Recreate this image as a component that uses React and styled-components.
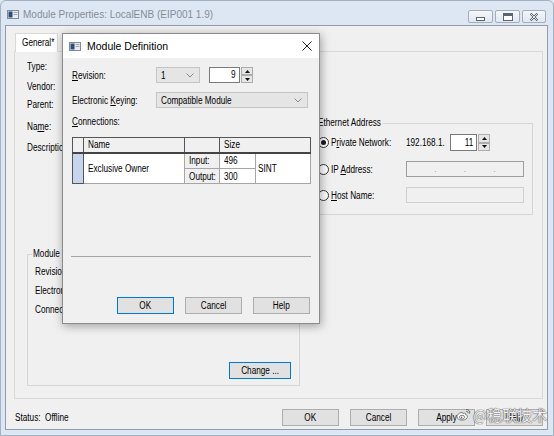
import React from 'react';
import styled, { createGlobalStyle, css } from 'styled-components';

const UI = '"Liberation Sans", Arial, sans-serif';

const Global = createGlobalStyle`
  html, body { margin: 0; padding: 0; background: #dde7f3; }
  body { font-family: ${UI}; font-size: 10px; color: #000; overflow: hidden; }
  * { box-sizing: border-box; }
  fieldset, legend { margin: 0; }
`;

/* Arial-Narrow-like rendering: Liberation Sans squeezed horizontally */
const narrow = css`
  white-space: nowrap;
  transform: scaleX(0.82);
  transform-origin: left center;
`;

const T = styled.span`
  display: inline-block;
  white-space: nowrap;
  transform: scaleX(0.82);
  transform-origin: ${p => p.$o || 'left'} center;
`;

const Window = styled.div`
  position: relative;
  width: 554px;
  height: 436px;
  background: #dde7f3;
  border: 1px solid #a3b1c2;
  border-radius: 6px 6px 0 0;
  display: flex;
  flex-direction: column;
`;

const TitleBar = styled.div`
  height: 24px;
  display: flex;
  align-items: center;
  padding: 2px 7px 0 6px;
`;

const Title = styled.div`
  margin-left: 4px;
  font-size: 10px;
  color: #838d99;
  white-space: nowrap;
`;

const Controls = styled.div`
  margin-left: auto;
  display: flex;
  gap: 2px;
  align-self: flex-start;
  margin-top: 7px;
`;

const CtrlButton = styled.div`
  width: ${p => p.$w}px;
  height: 13px;
  border: 1px solid #a4aebb;
  border-radius: 2px;
  background: linear-gradient(#f4f7fa, #e0e7ef);
  display: flex;
  align-items: center;
  justify-content: center;
`;

const Client = styled.div`
  flex: 1;
  margin: 0 5px 5px 4px;
  border: 1px solid #8f9db0;
  background: #f0f0f0;
  display: flex;
  flex-direction: column;
  padding: 7px 4px 0 8px;
`;

const TabStrip = styled.div`
  display: flex;
  height: 18px;
  position: relative;
  z-index: 1;
`;

const Tab = styled.div`
  margin-left: 1px;
  width: 43px;
  height: 19px;
  background: #fff;
  border: 1px solid #d9d9d9;
  border-bottom: none;
  padding-left: 6px;
  line-height: 17px;
`;

const TabPanel = styled.div`
  height: 348px;
  border: 1px solid #d9d9d9;
  background: #f0f0f0;
  display: flex;
  padding: 0 9px 12px 12px;
`;

const LeftCol = styled.div`
  width: 273px;
  display: flex;
  flex-direction: column;
`;

const RightCol = styled.div`
  margin-left: 10px;
  width: 223px;
`;

const Label = styled.div`
  ${narrow};
  margin-top: ${p => p.$mt || 0}px;
  height: 16px;
  line-height: 16px;
`;

const Group = styled.fieldset`
  margin-top: ${p => p.$mt}px;
  border: 1px solid #d5d5d5;
  min-width: 0;
  display: flex;
  flex-direction: column;
  padding: ${p => p.$pad};
  flex: ${p => (p.$grow ? 1 : 'none')};
`;

const Legend = styled.legend`
  width: ${p => p.$w}px;
  padding: 0 1px;
  margin-left: ${p => p.$ml}px;
  line-height: 12px;
  white-space: nowrap;
`;

const Button = styled.div`
  width: ${p => p.$w || 57}px;
  height: 17px;
  background: #e1e1e1;
  border: 1px solid ${p => (p.$default ? '#0078d7' : '#adadad')};
  display: flex;
  align-items: center;
  justify-content: center;
  flex: none;
`;

const ChangeButton = styled(Button)`
  margin-top: auto;
  align-self: flex-end;
`;

const NetRow = styled.div`
  display: flex;
  align-items: center;
  height: ${p => p.$h}px;
  margin-top: ${p => p.$mt || 0}px;
`;

const RadioLabel = styled.div`
  width: 88px;
  display: flex;
  align-items: center;
`;

const Radio = styled.span`
  flex: none;
  width: 11px;
  height: 11px;
  border-radius: 50%;
  border: 1px solid #333;
  background: #fff;
  margin-right: 2px;
  display: flex;
  align-items: center;
  justify-content: center;
  &::after {
    content: '';
    width: 5px;
    height: 5px;
    border-radius: 50%;
    background: ${p => (p.$checked ? '#1a1a1a' : 'transparent')};
  }
`;

const IpPrefix = styled.div`
  width: 44px;
`;

const SpinWrap = styled.div`
  display: flex;
  height: ${p => p.$h}px;
`;

const SpinField = styled.div`
  width: ${p => p.$w}px;
  height: 100%;
  background: #fff;
  border: 1px solid #7a7a7a;
  text-align: right;
  padding-right: 3px;
  line-height: ${p => p.$h - 2}px;
`;

const SpinButtons = styled.div`
  width: 14px;
  height: 100%;
  display: flex;
  flex-direction: column;
  padding: 0 1px;
`;

const SpinBtn = styled.div`
  flex: 1;
  background: #e6e6e6;
  border: 1px solid #adadad;
  display: flex;
  align-items: center;
  justify-content: center;
`;

const AddrField = styled.div`
  width: 118px;
  height: 16px;
  background: #f0f0f0;
  border: 1px solid ${p => (p.$dark ? '#9d9d9d' : '#cfcfcf')};
  display: flex;
  justify-content: space-evenly;
  align-items: center;
  color: #8a8a8a;
  font-size: 8px;
`;

const StatusBar = styled.div`
  flex: 1;
  display: flex;
  align-items: flex-start;
  padding: 10px 0 0 1px;
`;

const StatusText = styled.div`
  ${narrow};
  line-height: 17px;
  white-space: pre;
`;

const ButtonRow = styled.div`
  margin-left: auto;
  display: flex;
  gap: 11px;
  margin-top: ${p => p.$mt || 0}px;
  justify-content: flex-end;
`;

const Dialog = styled.div`
  position: absolute;
  left: 61px;
  top: 32px;
  width: 258px;
  border: 1px solid #8c8c8c;
  background: #f0f0f0;
  box-shadow: 1px 2px 9px rgba(0, 0, 0, 0.35);
  z-index: 2;
`;

const DialogTitle = styled.div`
  height: 24px;
  background: #fff;
  display: flex;
  align-items: center;
  padding: 0 7px 0 6px;
`;

const DialogTitleText = styled.div`
  margin-left: 6px;
  font-size: 10.5px;
`;

const CloseX = styled.div`
  margin-left: auto;
  display: flex;
`;

const DialogBody = styled.div`
  padding: 9px 9px 9px 9px;
  display: flex;
  flex-direction: column;
`;

const FormRow = styled.div`
  display: flex;
  align-items: center;
  height: 16px;
  margin-top: ${p => p.$mt || 0}px;
`;

const FormLabel = styled.div`
  ${narrow};
  width: 84px;
  flex: none;
`;

const Combo = styled.div`
  width: ${p => p.$w}px;
  height: 16px;
  background: #e5e5e5;
  border: 1px solid #c4c4c4;
  display: flex;
  align-items: center;
  padding: 0 5px 0 4px;
  justify-content: space-between;
`;

const SpinGap = styled.div`
  margin-left: 9px;
`;

const SectionLabel = styled.div`
  ${narrow};
  margin-top: 7px;
  line-height: 14px;
`;

const Table = styled.table`
  margin-top: 8px;
  width: 238px;
  border-collapse: collapse;
  table-layout: fixed;
  border: 1px solid #555;
`;

const Th = styled.th`
  height: 15px;
  padding: 0 0 0 4px;
  text-align: left;
  font-weight: normal;
  background: #f0f0f0;
  border-right: 1px solid #555;
  border-bottom: 2px solid #444;
`;

const Td = styled.td`
  height: ${p => p.$h || 15}px;
  padding: 0 0 0 ${p => (p.$pl ?? 4)}px;
  background: ${p => (p.$bg || '#fff')};
  border: 1px solid ${p => (p.$strong ? '#555' : '#a6a6a6')};
  white-space: nowrap;
`;

const Separator = styled.div`
  margin: 72px -1px 0 -1px;
  height: 1px;
  background: #a5a5a5;
`;

const Watermark = styled.div`
  position: absolute;
  left: 455px;
  top: 403px;
  display: flex;
  align-items: center;
  gap: 2px;
  font-family: "Noto Sans CJK SC", "Liberation Sans", sans-serif;
  font-size: 15px;
  color: rgba(255, 255, 255, 0.92);
  text-shadow: 0 0 1px rgba(60, 60, 60, 0.9), 0 0 1px rgba(60, 60, 60, 0.9);
  z-index: 3;
  white-space: nowrap;
`;

const AppIcon = () => (
  <svg width="12" height="9" viewBox="0 0 12 9">
    <rect x="0.5" y="0.5" width="11" height="8" fill="#e9edf1" stroke="#7f8b97" />
    <rect x="1.5" y="1.5" width="4" height="6" fill="#2b4a7e" />
    <rect x="6.5" y="2" width="4" height="1" fill="#9aa6b2" />
    <rect x="6.5" y="4" width="4" height="1" fill="#9aa6b2" />
  </svg>
);

const Chevron = () => (
  <svg width="8" height="5" viewBox="0 0 8 5">
    <polyline points="0.5,0.5 4,4 7.5,0.5" fill="none" stroke="#8a8a8a" strokeWidth="1" />
  </svg>
);

const Up = () => (
  <svg width="5" height="3" viewBox="0 0 5 3"><path d="M0 3 L2.5 0 L5 3Z" fill="#111" /></svg>
);
const Down = () => (
  <svg width="5" height="3" viewBox="0 0 5 3"><path d="M0 0 L2.5 3 L5 0Z" fill="#111" /></svg>
);

const Spin = ({ value, w, h }) => (
  <SpinWrap $h={h}>
    <SpinField $w={w} $h={h}><T $o="right">{value}</T></SpinField>
    <SpinButtons>
      <SpinBtn><Up /></SpinBtn>
      <SpinBtn><Down /></SpinBtn>
    </SpinButtons>
  </SpinWrap>
);

const U = styled.span`text-decoration: underline;`;

const WeiboLogo = () => (
  <svg width="15" height="13" viewBox="0 0 15 13">
    <path d="M6 4.5 C3 4.5 0.8 6.8 1 8.8 C1.2 11 3.6 12.3 6.3 12.2 C9.3 12.1 11.6 10.5 11.4 8.4 C11.3 7.3 10.4 6.9 9.6 6.8 C10 5.7 9.6 4.9 8.3 5.1 C7.6 5.2 7.2 5.5 7 5.6 C7.1 4.8 6.8 4.5 6 4.5Z" fill="rgba(255,255,255,0.9)" stroke="#666" strokeWidth="0.8" />
    <ellipse cx="6" cy="9.2" rx="2.6" ry="1.9" fill="none" stroke="#666" strokeWidth="0.8" />
    <circle cx="5.6" cy="9.4" r="0.8" fill="#666" />
    <path d="M10 1.5 C12.5 1.2 14.3 3.2 13.7 5.6" fill="none" stroke="#666" strokeWidth="1" />
    <path d="M10.2 3.3 C11.5 3.2 12.3 4.2 12 5.3" fill="none" stroke="#666" strokeWidth="1" />
  </svg>
);

export default function App() {
  return (
    <>
      <Global />
      <Window>
        <TitleBar>
          <AppIcon />
          <Title>Module Properties: LocalENB (EIP001 1.9)</Title>
          <Controls>
            <CtrlButton $w={25}>
              <svg width="9" height="4" viewBox="0 0 9 4" style={{ marginTop: 4 }}>
                <rect x="0.5" y="0.5" width="8" height="3" fill="#fff" stroke="#5a6572" />
              </svg>
            </CtrlButton>
            <CtrlButton $w={25}>
              <svg width="10" height="8" viewBox="0 0 10 8">
                <rect x="0.5" y="0.5" width="9" height="7" fill="#fff" stroke="#5a6572" />
                <rect x="1" y="1" width="8" height="2" fill="#5a6572" />
              </svg>
            </CtrlButton>
            <CtrlButton $w={24}>
              <svg width="10" height="8" viewBox="0 0 10 8">
                <path d="M1.5 0.5 L8.5 7.5 M8.5 0.5 L1.5 7.5" stroke="#5a6572" strokeWidth="2.2" />
                <path d="M1.5 0.5 L8.5 7.5 M8.5 0.5 L1.5 7.5" stroke="#fff" strokeWidth="0.8" />
              </svg>
            </CtrlButton>
          </Controls>
        </TitleBar>

        <Client>
          <TabStrip>
            <Tab><T>General*</T></Tab>
          </TabStrip>
          <TabPanel>
            <LeftCol>
              <Label $mt={7}>Type:</Label>
              <Label $mt={4}>Vendor:</Label>
              <Label $mt={2}>Parent:</Label>
              <Label $mt={6}>Na<U>m</U>e:</Label>
              <Label $mt={5}>Description:</Label>
              <Group $mt={92} $grow $pad="0 8px 6px 7px">
                <Legend $ml={-3} $w={66}><T>Module Definition</T></Legend>
                <Label $mt={4}>Revision:</Label>
                <Label $mt={3}>Electronic Keying:</Label>
                <Label $mt={3}>Connections:</Label>
                <ChangeButton $w={62} $default><T $o="center">Change ...</T></ChangeButton>
              </Group>
            </LeftCol>
            <RightCol>
              <Group $mt={65} $pad="5px 8px 11px 7px">
                <Legend $ml={-1} $w={66}><T>Ethernet Address</T></Legend>
                <NetRow $h={17}>
                  <RadioLabel><Radio $checked /><T>P<U>r</U>ivate Network:</T></RadioLabel>
                  <IpPrefix><T>192.168.1.</T></IpPrefix>
                  <Spin value="11" w={27} h={17} />
                </NetRow>
                <NetRow $h={16} $mt={10}>
                  <RadioLabel><Radio /><T>IP <U>A</U>ddress:</T></RadioLabel>
                  <AddrField $dark><span>.</span><span>.</span><span>.</span></AddrField>
                </NetRow>
                <NetRow $h={16} $mt={10}>
                  <RadioLabel><Radio /><T><U>H</U>ost Name:</T></RadioLabel>
                  <AddrField />
                </NetRow>
              </Group>
            </RightCol>
          </TabPanel>
          <StatusBar>
            <StatusText>Status:  Offline</StatusText>
            <ButtonRow>
              <Button><T $o="center">OK</T></Button>
              <Button><T $o="center">Cancel</T></Button>
              <Button><T $o="center">Apply</T></Button>
              <Button><T $o="center">Help</T></Button>
            </ButtonRow>
          </StatusBar>
        </Client>

        <Dialog>
          <DialogTitle>
            <AppIcon />
            <DialogTitleText>Module Definition</DialogTitleText>
            <CloseX>
              <svg width="10" height="10" viewBox="0 0 10 10">
                <path d="M0.5 0.5 L9.5 9.5 M9.5 0.5 L0.5 9.5" stroke="#222" strokeWidth="1" />
              </svg>
            </CloseX>
          </DialogTitle>
          <DialogBody>
            <FormRow>
              <FormLabel><U>R</U>evision:</FormLabel>
              <Combo $w={44}><T>1</T><Chevron /></Combo>
              <SpinGap><Spin value="9" w={31} h={16} /></SpinGap>
            </FormRow>
            <FormRow $mt={9}>
              <FormLabel>Electronic <U>K</U>eying:</FormLabel>
              <Combo $w={152}><T>Compatible Module</T><Chevron /></Combo>
            </FormRow>
            <SectionLabel><U>C</U>onnections:</SectionLabel>
            <Table>
              <colgroup>
                <col style={{ width: 11 }} />
                <col style={{ width: 101 }} />
                <col style={{ width: 35 }} />
                <col style={{ width: 36 }} />
                <col style={{ width: 55 }} />
              </colgroup>
              <thead>
                <tr>
                  <Th />
                  <Th><T>Name</T></Th>
                  <Th />
                  <Th colSpan={2}><T>Size</T></Th>
                </tr>
              </thead>
              <tbody>
                <tr>
                  <Td rowSpan={2} $bg="#c6d5ed" $strong $pl={0} />
                  <Td rowSpan={2}><T>Exclusive Owner</T></Td>
                  <Td $bg="#f0f0f0" $h={16}><T>Input:</T></Td>
                  <Td $h={16}><T>496</T></Td>
                  <Td rowSpan={2} $pl={2}><T>SINT</T></Td>
                </tr>
                <tr>
                  <Td $bg="#f0f0f0"><T>Output:</T></Td>
                  <Td><T>300</T></Td>
                </tr>
              </tbody>
            </Table>
            <Separator />
            <ButtonRow $mt={40}>
              <Button $default><T $o="center">OK</T></Button>
              <Button><T $o="center">Cancel</T></Button>
              <Button><T $o="center">Help</T></Button>
            </ButtonRow>
          </DialogBody>
        </Dialog>

        <Watermark>
          <WeiboLogo />
          <span>@稳联技术</span>
        </Watermark>
      </Window>
    </>
  );
}
